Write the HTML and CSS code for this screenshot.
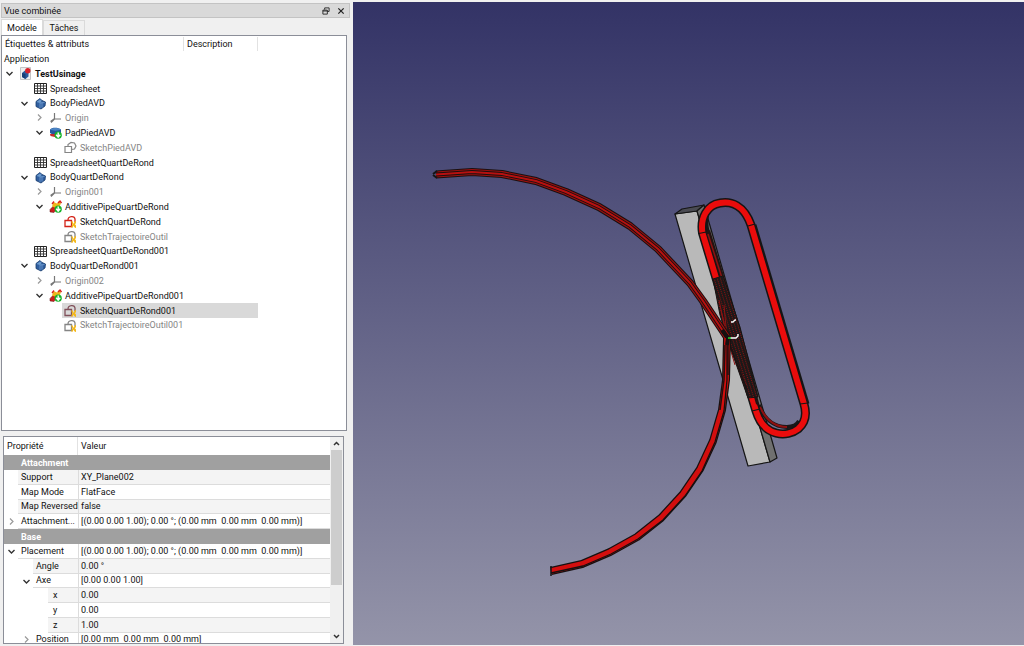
FILE: index.html
```
<!DOCTYPE html>
<html lang="fr">
<head>
<meta charset="utf-8">
<title>TestUsinage</title>
<link rel="stylesheet" href="styles.css">
</head>
<body>
<svg class="defs" aria-hidden="true">
  <symbol id="open" viewBox="0 0 9 9"><path d="M1.5 3 4.5 6 7.5 3" fill="none" stroke="#333" stroke-width="1.4"/></symbol>
  <symbol id="closed" viewBox="0 0 9 9"><path d="M3 1.5 6 4.5 3 7.5" fill="none" stroke="#999" stroke-width="1.2"/></symbol>
  <symbol id="doc" viewBox="0 0 13 13"><path d="M1.5.5h10v12h-10z" fill="#eee" stroke="#c4c4c4"/><path d="M3 6 6 3.500 9.500 5v4.500L6.500 12 3 10z" fill="#2b5a9b"/><path d="M3 6 6.500 7v5L3 10z" fill="#173f78"/><circle cx="8.800" cy="3.800" r="2.700" fill="#d8202a"/></symbol>
  <symbol id="sheet" viewBox="0 0 13 13"><path d="M.5 1.500h12v10H.5z" fill="#fff" stroke="#222"/><path d="M.5 4h12M.5 6.500h12M.5 9h12M3.500 2v9.500M6.500 2v9.500M9.500 2v9.500" stroke="#333" stroke-width=".9"/></symbol>
  <symbol id="body" viewBox="0 0 13 13"><path d="M2 4.500 6 1.500 8 3.500 11.500 5 11 9 7 12 2 9.500z" fill="#315f9f" stroke="#153a6c" stroke-width=".8"/><path d="M2.500 5 6 2.500 7.500 4 6 6z" fill="#6d9cd0"/><path d="M6 6 10.500 5.500M6 6v5M8 5.500v5" stroke="#7ba6d8" stroke-width=".7"/></symbol>
  <symbol id="origin" viewBox="0 0 13 13"><path d="M5.500 2v6H12M5.500 8 2 11.500M5 8 1.500 10.500" fill="none" stroke="#777" stroke-width="1.200"/></symbol>
  <symbol id="pad" viewBox="0 0 13 13"><path d="M1 3.500C3 1 9 1 12 3.500V7c-3 2-8 2-11 0z" fill="#24599c"/><path d="M1 3.500C4 1.500 9 1.500 12 3.500 9 5 4 5 1 3.500z" fill="#4a83c3"/><path d="M1 8h7v3.500L1.500 10z" fill="#c62a2a"/><circle cx="9.200" cy="9.200" r="3.600" fill="#17b52b"/><path d="M9.200 6.500v4M7.200 8.800l2 2.400 2-2.400" fill="none" stroke="#fff" stroke-width="1.400"/></symbol>
  <symbol id="pipe" viewBox="0 0 13 13"><path d="M1 9.500 5 5.500 8 8 5 12.500 1 12z" fill="#cc1d1d" stroke="#5e1010" stroke-width=".5"/><path d="M3 6.500 4.500 2 8 3.500 10 1l2 2-1.500 4L7 8z" fill="#f0b51c"/><path d="M3 4 5 1.500M9 3l2-2L12.500 3" fill="none" stroke="#d71d1d" stroke-width="1.300"/><circle cx="9.200" cy="9.200" r="3.600" fill="#17b52b"/><path d="M9.200 6.500v4M7.200 8.800l2 2.400 2-2.400" fill="none" stroke="#fff" stroke-width="1.400"/></symbol>
  <symbol id="sketch" viewBox="0 0 13 13"><path d="M1 5.500h6.500v6H1zM4 5V3.500L7 1.500l3.500.5L12 5l-1.500 3-3 .5" fill="none" stroke="currentColor" stroke-width="1.200"/></symbol>
  <symbol id="sketchx" viewBox="0 0 13 13"><path d="M1 5.500h6.500v6H1zM4 5C4 1 10.500.5 11 4v3" fill="none" stroke="currentColor" stroke-width="1.300"/><path d="M7.500 6C9 6 9 8 9.500 9c.5-1.500 1-3 2.500-3v2l-1 1.200 1 1.300V13c-1.500 0-2-1.500-2.500-2.500C9 12 9 13 7.500 13v-2l1-1.800-1-1.200z" fill="#f4b819"/></symbol>
</svg>
<div class="window">
  <aside class="dock">
    <header class="titlebar">
      <h1>Vue combinée</h1>
      <button aria-label="Détacher"><svg viewBox="0 0 9 9"><path d="M3 3V1h5v4H6M1 3.500h5V8H1zM1 4.500h5" fill="none" stroke="#222"/></svg></button>
      <button aria-label="Fermer"><svg viewBox="0 0 9 9"><path d="m1.500 1.500 6 6m0-6-6 6" stroke="#222" stroke-width="1.400"/></svg></button>
    </header>
    <nav class="tabs" role="tablist">
      <button class="tab active" role="tab" aria-selected="true">Modèle</button>
      <button class="tab" role="tab" aria-selected="false">Tâches</button>
    </nav>
    <section class="tree">
      <div class="tree-head"><span>Étiquettes &amp; attributs</span><span>Description</span></div>
      <ul>
        <li class="root">Application</li>
        <li class="l0"><button class="toggle" aria-label="Réduire"><svg><use href="#open"/></svg></button><svg class="icon"><use href="#doc"/></svg><b>TestUsinage</b></li>
        <li class="l1"><i class="toggle"></i><svg class="icon"><use href="#sheet"/></svg><span>Spreadsheet</span></li>
        <li class="l1"><button class="toggle" aria-label="Réduire"><svg><use href="#open"/></svg></button><svg class="icon"><use href="#body"/></svg><span>BodyPiedAVD</span></li>
        <li class="l2 off"><button class="toggle" aria-label="Développer"><svg><use href="#closed"/></svg></button><svg class="icon"><use href="#origin"/></svg><span>Origin</span></li>
        <li class="l2"><button class="toggle" aria-label="Réduire"><svg><use href="#open"/></svg></button><svg class="icon"><use href="#pad"/></svg><span>PadPiedAVD</span></li>
        <li class="l3 off"><i class="toggle"></i><svg class="icon"><use href="#sketch"/></svg><span>SketchPiedAVD</span></li>
        <li class="l1"><i class="toggle"></i><svg class="icon"><use href="#sheet"/></svg><span>SpreadsheetQuartDeRond</span></li>
        <li class="l1"><button class="toggle" aria-label="Réduire"><svg><use href="#open"/></svg></button><svg class="icon"><use href="#body"/></svg><span>BodyQuartDeRond</span></li>
        <li class="l2 off"><button class="toggle" aria-label="Développer"><svg><use href="#closed"/></svg></button><svg class="icon"><use href="#origin"/></svg><span>Origin001</span></li>
        <li class="l2"><button class="toggle" aria-label="Réduire"><svg><use href="#open"/></svg></button><svg class="icon"><use href="#pipe"/></svg><span>AdditivePipeQuartDeRond</span></li>
        <li class="l3"><i class="toggle"></i><svg class="icon red"><use href="#sketchx"/></svg><span>SketchQuartDeRond</span></li>
        <li class="l3 off"><i class="toggle"></i><svg class="icon"><use href="#sketchx"/></svg><span>SketchTrajectoireOutil</span></li>
        <li class="l1"><i class="toggle"></i><svg class="icon"><use href="#sheet"/></svg><span>SpreadsheetQuartDeRond001</span></li>
        <li class="l1"><button class="toggle" aria-label="Réduire"><svg><use href="#open"/></svg></button><svg class="icon"><use href="#body"/></svg><span>BodyQuartDeRond001</span></li>
        <li class="l2 off"><button class="toggle" aria-label="Développer"><svg><use href="#closed"/></svg></button><svg class="icon"><use href="#origin"/></svg><span>Origin002</span></li>
        <li class="l2"><button class="toggle" aria-label="Réduire"><svg><use href="#open"/></svg></button><svg class="icon"><use href="#pipe"/></svg><span>AdditivePipeQuartDeRond001</span></li>
        <li class="l3 selected"><i class="toggle"></i><div class="pick"><svg class="icon plum"><use href="#sketchx"/></svg><span>SketchQuartDeRond001</span></div></li>
        <li class="l3 off"><i class="toggle"></i><svg class="icon"><use href="#sketchx"/></svg><span>SketchTrajectoireOutil001</span></li>
      </ul>
    </section>
    <section class="props">
      <div class="props-view">
        <table>
          <thead><tr><th>Propriété</th><th>Valeur</th></tr></thead>
          <tbody>
            <tr class="group"><th colspan="2">Attachment</th></tr>
            <tr class="alt"><td><div class="name">Support</div></td><td>XY_Plane002</td></tr>
            <tr><td><div class="name">Map Mode</div></td><td>FlatFace</td></tr>
            <tr class="alt"><td><div class="name">Map Reversed</div></td><td>false</td></tr>
            <tr><td><div class="cell"><button class="toggle" aria-label="Développer"><svg><use href="#closed"/></svg></button><div class="name">Attachment...</div></div></td><td>[(0.00 0.00 1.00); 0.00 °; (0.00 mm&nbsp; 0.00 mm&nbsp; 0.00 mm)]</td></tr>
            <tr class="group"><th colspan="2">Base</th></tr>
            <tr><td><div class="cell"><button class="toggle" aria-label="Réduire"><svg><use href="#open"/></svg></button><div class="name">Placement</div></div></td><td>[(0.00 0.00 1.00); 0.00 °; (0.00 mm&nbsp; 0.00 mm&nbsp; 0.00 mm)]</td></tr>
            <tr class="alt"><td class="p1"><div class="name">Angle</div></td><td>0.00 °</td></tr>
            <tr><td class="p1"><div class="cell"><button class="toggle" aria-label="Réduire"><svg><use href="#open"/></svg></button><div class="name">Axe</div></div></td><td>[0.00 0.00 1.00]</td></tr>
            <tr class="alt"><td class="p2"><div class="name">x</div></td><td>0.00</td></tr>
            <tr><td class="p2"><div class="name">y</div></td><td>0.00</td></tr>
            <tr class="alt"><td class="p2"><div class="name">z</div></td><td>1.00</td></tr>
            <tr class="last"><td class="p1"><div class="cell"><button class="toggle" aria-label="Développer"><svg><use href="#closed"/></svg></button><div class="name">Position</div></div></td><td>[0.00 mm&nbsp; 0.00 mm&nbsp; 0.00 mm]</td></tr>
          </tbody>
        </table>
      </div>
      <div class="scrollbar">
        <button aria-label="Monter"><svg viewBox="0 0 9 9"><path d="M2 6 4.500 3.500 7 6" fill="none" stroke="#333" stroke-width="1.500"/></svg></button>
        <div class="track"><div class="thumb"></div></div>
        <button aria-label="Descendre"><svg viewBox="0 0 9 9"><path d="M2 3 4.500 5.500 7 3" fill="none" stroke="#333" stroke-width="1.500"/></svg></button>
      </div>
    </section>
  </aside>
  <main class="viewport">
    <svg viewBox="353 2 671 643" role="img" aria-label="Vue 3D" stroke-linejoin="round">
      <defs>
        <pattern id="mesh" width="3" height="2" patternUnits="userSpaceOnUse" patternTransform="rotate(-17)"><path d="M0 0h3v2H0z" fill="#1c1818"/><path d="M1 1h1v1H1z" fill="#8c1010"/></pattern>
        <path id="upper" d="M436 174.500 472 172 502 174 536 181 566 192 599 207 630 226 658 249 690 283 703 301 727 337"/>
        <path id="lower" d="M727 338 726 380 722 410 713 441 700 469 683 494 661 518 637 537 610 552 582 564 551 571"/>
        <path id="loop" d="M702.500 233 756 411C764 438 788 437 798 429 805 423 807 414 804 404L751 225C744 205 731 201 720 203 707 205 700 218 702.500 233z"/>
      </defs>
      <g stroke="#151515" stroke-width="1.200">
        <path d="M675 214 697 211 770 462 748 466z" fill="#b9b9b9"/>
        <path d="M675 214 682 209 704 205 697 211z" fill="#4a4b52"/>
        <path d="M697 211 704 205 777 458 770 462z" fill="#707070"/>
      </g>
      <g fill="none">
        <path d="M708 233C703 214 710 206 716 204M759 405C764 419 774 427 787 427 793 427 797 425 799 421" stroke="#1a1717" stroke-width="4"/>
        <path d="M760 407C766 420 775 427 787 427" stroke="#8e1010" stroke-width="2"/>
        <path d="M754 225 807 404" stroke="#171717" stroke-width="5"/>
        <use href="#loop" stroke="#151515" stroke-width="9"/>
        <use href="#loop" stroke="#ea0c0c" stroke-width="6"/>
        <path d="M699 233.500 706 232M748 226 755 224M800 404 808 403M752 411 760 409" stroke="#151515" stroke-width="1.200"/>
      </g>
      <path d="M706 232 710 230 739 325 760 407 756 404 720 278z" fill="#231313"/>
      <path d="M708 234 722 278" stroke="#8c1212" stroke-width="1.500"/>
      <path d="M713 279 723 276 740 327 758 397 748 398 727 338 720 315z" fill="url(#mesh)" stroke="#161313"/>
      <path d="M719 300 727 338 746 385M724 305 727 338 743 380M721 310 727 338 735 365" fill="none" stroke="#8e1212"/>
      <path d="M728 340 747 390" fill="none" stroke="#1a1313" stroke-width="2"/>
      <g fill="none">
        <use href="#upper" stroke="#1a1010" stroke-width="8"/>
        <use href="#upper" stroke="#9a1010" stroke-width="6"/>
        <use href="#upper" stroke="#1a1010" stroke-width="3.800"/>
        <use href="#upper" stroke="#b81010" stroke-width="2"/>
        <path d="M433 174 437 171M433 175 437 178" stroke="#151515" stroke-width="2"/>
        <use href="#lower" stroke="#171010" stroke-width="8"/>
        <use href="#lower" stroke="#d30e0e" stroke-width="5.500"/>
        <path d="M727 338 727 380 724 411 715 442 702 471 685 496 663 520 638 539 611 554 583 566 551 573" stroke="#171010" stroke-width="1.300"/>
        <path d="M725 345 724 380 720 410M728 345 728 375" stroke="#241010" stroke-width="1.500"/>
        <path d="M551 566v10" stroke="#151515" stroke-width="1.500"/>
      </g>
      <path d="M722 330 728 338 727 345" fill="none" stroke="#151111" stroke-width="4"/>
      <path d="M731 322h2l2-2h1M730 338h6l2-2v-2" fill="none" stroke="#fff" stroke-width="1.400"/>
      <path d="M728 338h3" stroke="#25d52b" stroke-width="1.500"/>
    </svg>
  </main>
</div>
</body>
</html>
```
FILE: styles.css
```
* { box-sizing: border-box; }
body { margin: 0; font: 9px/14px Roboto, "Open Sans", sans-serif; color: #111; background: #f0f0f0; }
button { margin: 0; padding: 0; border: 0; background: none; font: inherit; color: inherit; }
ul { list-style: none; margin: 0; padding: 0; }
.defs { display: none; }
.window { display: flex; height: 100vh; padding: 2px 0 1px; }

.dock { flex: none; width: 353px; padding: 1px 6px 0 1px; display: flex; flex-direction: column; }
.titlebar { flex: none; display: flex; align-items: center; gap: 7px; height: 15px; padding: 0 4px 0 2px; margin-right: -3px; background: #d9d9d9; border: 1px solid #c3c3c3; }
.titlebar h1 { flex: 1; margin: 0; font-size: inherit; font-weight: 400; }
.titlebar button { display: flex; }
.titlebar svg { width: 8px; height: 8px; }
.tabs { flex: none; display: flex; align-items: flex-end; height: 17px; }
.tab { height: 15px; width: 42px; border: 1px solid #dadada; border-bottom: 0; line-height: 14px; }
.tab.active { height: 16px; background: #fff; }

.tree { flex: 1; min-height: 0; overflow: hidden; background: #fff; border: 1px solid #8b8e98; padding-top: 1px; }
.tree-head { display: flex; height: 14px; }
.tree-head span { width: 74px; padding-left: 3px; border-right: 1px solid #e2e2e2; }
.tree-head span:first-child { width: 182px; }
.tree ul { width: 256px; display: grid; grid-auto-rows: 15px 15px 15px 14px 15px; }
.tree li { display: flex; align-items: center; white-space: nowrap; }
.tree .root { padding-left: 2px; }
.l1 { padding-left: 15px; }
.l2 { padding-left: 30px; }
.l3 { padding-left: 45px; }
.off { color: #858585; }
.toggle { flex: none; width: 15px; display: flex; justify-content: center; }
.toggle svg { width: 9px; height: 9px; }
.icon { flex: none; width: 13px; height: 13px; margin: 0 3px 0 2px; }
.red { color: #d32218; }
.plum { color: #80505a; }
.pick { flex: 1; align-self: stretch; display: flex; align-items: center; background: #d9d9d9; }

.props { flex: none; display: flex; height: 208px; margin: 5px 3px 1px 2px; background: #fff; border: 1px solid #8b8e98; }
.props-view { flex: 1; min-width: 0; overflow: hidden; }
table { width: 100%; border-collapse: separate; border-spacing: 0; table-layout: fixed; }
th, td { padding: 0; text-align: left; font-weight: 400; white-space: nowrap; line-height: 14px; }
th:first-child { width: 74px; }
thead th { height: 18px; padding-left: 3px; border-right: 1px solid #e2e2e2; }
thead th:last-child { border-right: 0; }
tbody tr { height: 15px; }
tbody tr:nth-child(5n+4) { height: 14px; }
tbody tr:nth-child(5n+4) td { line-height: 13px; }
td { border-bottom: 1px solid #dcdcdc; }
td:last-child { padding-left: 2px; border-left: 1px solid #dcdcdc; }
td:first-child { padding-left: 14px; border-bottom: 0; }
td.p1:first-child { padding-left: 29px; }
td.p2:first-child { padding-left: 44px; }
.name { flex: 1; padding-left: 3px; border-bottom: 1px solid #dcdcdc; }
.p2 .name { padding-left: 5px; }
.cell { display: flex; align-items: center; margin-left: -14px; }
.cell .toggle { width: 14px; }
.alt .name, .alt td:last-child { background: #f4f4f4; }
.group th { padding-left: 17px; background: #a0a0a0; color: #fff; font-weight: 700; }
tbody .last { height: 12px; }
tbody .last td { line-height: 12px; border-bottom: 0; }
.last .name { border-bottom: 0; }
.scrollbar { flex: none; width: 13px; display: flex; flex-direction: column; background: #f0f0f0; padding: 0 1px; }
.scrollbar button { height: 13px; display: flex; align-items: center; justify-content: center; }
.scrollbar svg { width: 9px; height: 9px; }
.track { flex: 1; }
.thumb { height: 75%; background: #cdcdcd; }

.viewport { flex: 1; min-width: 0; background: linear-gradient(#333366, #9494a9); }
.viewport svg { display: block; width: 100%; height: 100%; }
```
